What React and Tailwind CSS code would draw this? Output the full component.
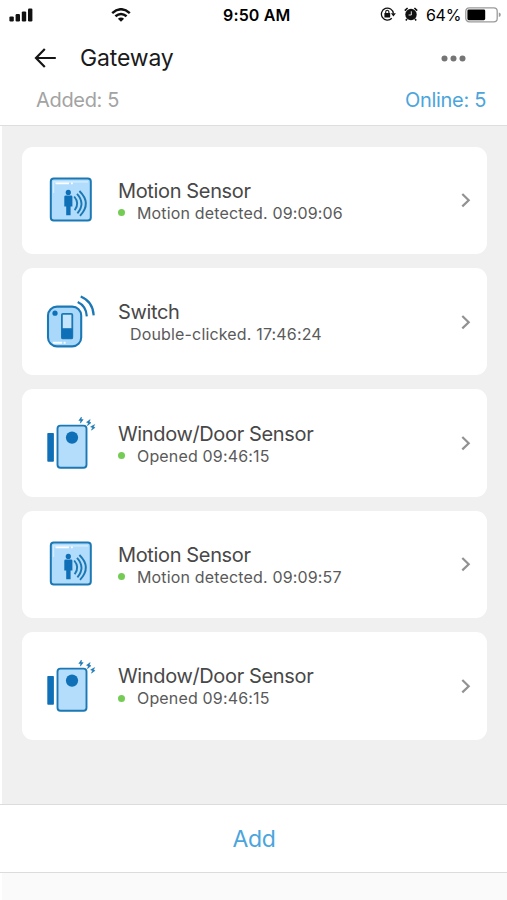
import React from "react";

const devices = [
  { id: 1, type: "motion", name: "Motion Sensor", status: "Motion detected. 09:09:06", online: true },
  { id: 2, type: "switch", name: "Switch", status: "Double-clicked. 17:46:24", online: false },
  { id: 3, type: "door", name: "Window/Door Sensor", status: "Opened 09:46:15", online: true },
  { id: 4, type: "motion", name: "Motion Sensor", status: "Motion detected. 09:09:57", online: true },
  { id: 5, type: "door", name: "Window/Door Sensor", status: "Opened 09:46:15", online: true },
];

const MotionIcon = () => (
  <svg className="w-[60px] h-[60px] mt-[2px] shrink-0" viewBox="0 0 60 60" fill="none" stroke="#1c78b4">
    <rect x="6.8" y="7.4" width="40" height="42.2" rx="3" fill="#b1dcfc" strokeWidth="2" />
    <path d="M9.6 22V10.8H44" stroke="#d5edfe" strokeWidth="1.2" />
    <path d="M11.5 12.4H25M27 12.4h1.8" stroke="#fff" strokeWidth="1.8" />
    <circle cx="24.3" cy="21.4" r="2.6" fill="#0f70b7" stroke="none" />
    <path d="M21.7 24.6h5.4q1.3 0 1.3 1.2v9.8h-1.8V44.2h-4.4V35.6h-1.9V25.8q0-1.2 1.4-1.2z" fill="#0f70b7" stroke="none" />
    <path d="M30.2 25.5Q36 32.3 30.7 39.3M33 22.8Q41.7 32.3 33.4 42.4M35.4 20Q48 32.3 36 44.8" strokeWidth="1.9" />
  </svg>
);

const SwitchIcon = () => (
  <svg className="w-[60px] h-[60px] mt-[2px] shrink-0" viewBox="0 0 60 60" fill="none" stroke="#1c78b4">
    <rect x="4" y="13.6" width="33.2" height="39.8" rx="9" fill="#a9d8fb" strokeWidth="2.1" />
    <path d="M8.8 49.8h9.4M19.6 49.8h2" stroke="#f7fcff" strokeWidth="2" />
    <circle cx="11" cy="20.2" r="2.6" fill="#0f70b7" stroke="none" />
    <rect x="17.9" y="20.8" width="10.4" height="24.6" rx="1" fill="#c5e5fd" strokeWidth="1.8" />
    <path d="M18 35.2h10.2v10.2H18z" fill="#0f70b7" stroke="none" />
    <path d="M33.7 9Q42.3 13 42.8 23.4M36.7 3.4Q49 8.4 49.7 22.4" strokeWidth="2.2" />
  </svg>
);

const DoorIcon = () => (
  <svg className="w-[60px] h-[60px] mt-[2px] shrink-0" viewBox="0 0 60 60" fill="none" stroke="#1c78b4">
    <rect x="3.3" y="18.9" width="6.6" height="28.8" rx="0.8" fill="#0f70b7" stroke="none" />
    <rect x="13.5" y="11.6" width="29" height="42.2" rx="3" fill="#b3ddfb" strokeWidth="1.9" />
    <circle cx="28" cy="23.6" r="6.1" fill="#0f70b7" stroke="none" />
    <g fill="#1c78b4" stroke="#1c78b4" strokeWidth="0.5">
      <path d="M37.4 3L34.8 6.6h1.9l-.3 2.6L39.2 5.6h-1.9z" />
      <path d="M46.2 5.6L42.5 8.2l1.9.7-1 2.8 3.6-3-1.8-.7z" />
      <path d="M50.7 10.6L46.6 12.8l2 .9-1.2 2.5 3.7-2.7-1.8-.6z" />
    </g>
  </svg>
);

const icons = { motion: MotionIcon, switch: SwitchIcon, door: DoorIcon };

const StatusBar = () => (
  <div className="grid grid-cols-[111px_1fr_auto] items-center h-[30px] pl-[9px] pr-[6px] text-black">
    <svg className="w-[24px] h-[14px] -mt-px" viewBox="0 0 24 14" fill="#111">
      <rect x="0.4" y="8.4" width="4.4" height="5" rx="1.2" />
      <rect x="6.6" y="6" width="4.4" height="7.4" rx="1.2" />
      <rect x="12.8" y="3.4" width="4.4" height="10" rx="1.2" />
      <rect x="19" y="0.6" width="4.4" height="12.8" rx="1.2" />
    </svg>
    <div className="flex items-center">
      <svg className="w-[20px] h-[14px] -ml-[9px] -mt-px" viewBox="0 0 20 14" fill="none" stroke="#111" strokeWidth="2.5">
        <path d="M1.2 5.1Q10-2.6 18.8 5.1M4.4 8.3Q10 3.6 15.6 8.3" />
        <path d="M6.9 10.7Q10 8.2 13.1 10.7L10 13.7z" fill="#111" stroke="none" />
      </svg>
      <span className="ml-[92px] text-[16px] leading-none font-semibold tracking-[0.15px] whitespace-nowrap">9:50 AM</span>
    </div>
    <div className="flex items-center">
      <svg className="w-[16px] h-[14px] -mt-[2px]" viewBox="0 0 16 14" fill="none" stroke="#111" strokeWidth="1.3">
        <path d="M11.8 11.2A6 6 0 1 1 13.4 6.5" />
        <path d="M10.9 6.3h5L13.4 9.4z" fill="#111" stroke="none" />
        <rect x="4.4" y="6" width="5.8" height="4.4" rx="0.5" fill="#111" stroke="none" />
        <path d="M5.7 6.2V4.9a1.6 1.6 0 0 1 3.2 0v1.3" strokeWidth="1.1" />
      </svg>
      <svg className="w-[14px] h-[14px] ml-[8px] -mt-[2px]" viewBox="0 0 14 14" fill="none">
        <circle cx="7" cy="7.5" r="5.7" fill="#111" />
        <path d="M.8 3.6L3.6 1M13.2 3.6L10.4 1M3 12l-1.2 1.4M11 12l1.2 1.4" stroke="#111" strokeWidth="1.6" />
        <path d="M7.3 4.3V8H4.6" stroke="#fff" strokeWidth="0.9" />
      </svg>
      <span className="ml-[8px] w-[34px] text-[16px] leading-none tracking-[-0.3px] whitespace-nowrap">64%</span>
      <svg className="w-[36px] h-[16px] ml-[5px]" viewBox="0 0 36 16">
        <rect x="0.8" y="0.8" width="31.4" height="14" rx="3.4" fill="none" stroke="#9a9a9a" strokeWidth="1.3" />
        <rect x="2.4" y="2.4" width="17.8" height="10.8" rx="1.4" fill="#000" />
        <path d="M33.8 5.5q2 .6 2 2.3t-2 2.3z" fill="#9a9a9a" />
      </svg>
    </div>
  </div>
);

const Header = ({ title = "Gateway", added = 5, online = 5 }) => {
  return (
    <header className="h-[126px] shrink-0 bg-white border-b border-[#dedede]">
      <StatusBar />
      <div className="flex items-center h-[56px] pl-[34px] pr-[41px]">
        <button className="flex">
          <svg className="w-[22px] h-[20px]" viewBox="0 0 22 20" fill="none" stroke="#151515" strokeWidth="2.2">
            <path d="M21.8 10H2.2M10.8 1L2 10l8.8 9" />
          </svg>
        </button>
        <h1 className="ml-[24px] text-[23px] leading-none tracking-[-0.15px] text-[#1a1a1a]">{title}</h1>
        <svg className="w-[25px] h-[7px] ml-auto" viewBox="0 0 25 7" fill="#757575">
          <circle cx="3.5" cy="3.5" r="3" />
          <circle cx="12.5" cy="3.5" r="3" />
          <circle cx="21.5" cy="3.5" r="3" />
        </svg>
      </div>
      <div className="flex items-center justify-between h-[28px] pl-[36px] pr-[21px] text-[20px] leading-none tracking-[-0.32px]">
        <span className="text-[#a3a3a3]">Added: {added}</span>
        <span className="text-[#4ba5dc]">Online: {online}</span>
      </div>
    </header>
  );
};

const DeviceCard = ({ device }) => {
  const Icon = icons[device.type];
  return (
    <li className="flex items-center h-[107.4px] shrink-0 rounded-[11px] bg-white pl-[22px] pr-[16px]">
      <Icon />
      <div className="ml-[14px] pt-[2px]">
        <div className="text-[20px] leading-[23px] tracking-[-0.36px] text-[#484848]">{device.name}</div>
        <div className="flex items-center text-[16px] leading-[20px] tracking-[0.16px] text-[#5a5a5a]">
          {device.online && <span className="w-[7px] h-[7px] mr-[12px] rounded-full bg-[#74cc54]" />}
          <span className={device.online ? "" : "ml-[12px]"}>{device.status}</span>
        </div>
      </div>
      <svg className="w-[10px] h-[16px] ml-auto" viewBox="0 0 10 16" fill="none" stroke="#929292" strokeWidth="2.2">
        <path d="M1.3 2L7.7 8.2l-6.4 6.2" />
      </svg>
    </li>
  );
};

const App = () => {
  return (
    <div className="flex flex-col w-[507px] h-[900px] overflow-hidden bg-white font-['Inter',sans-serif]">
      <Header />
      <main className="flex-1 ml-[2px] pt-[20.6px] pl-[20px] pr-[20px] bg-[#f0f0f0]">
        <ul className="flex flex-col gap-[14px]">
          {devices.map((device) => (
            <DeviceCard key={device.id} device={device} />
          ))}
        </ul>
      </main>
      <button className="h-[69px] shrink-0 pt-[2px] pl-px border-y border-[#dcdcdc] bg-white text-[23px] leading-none tracking-[-0.3px] text-[#4ba5dc]">
        Add
      </button>
      <div className="h-[27px] shrink-0 ml-[2px] bg-[#fafafa]" />
    </div>
  );
};

export default App;
